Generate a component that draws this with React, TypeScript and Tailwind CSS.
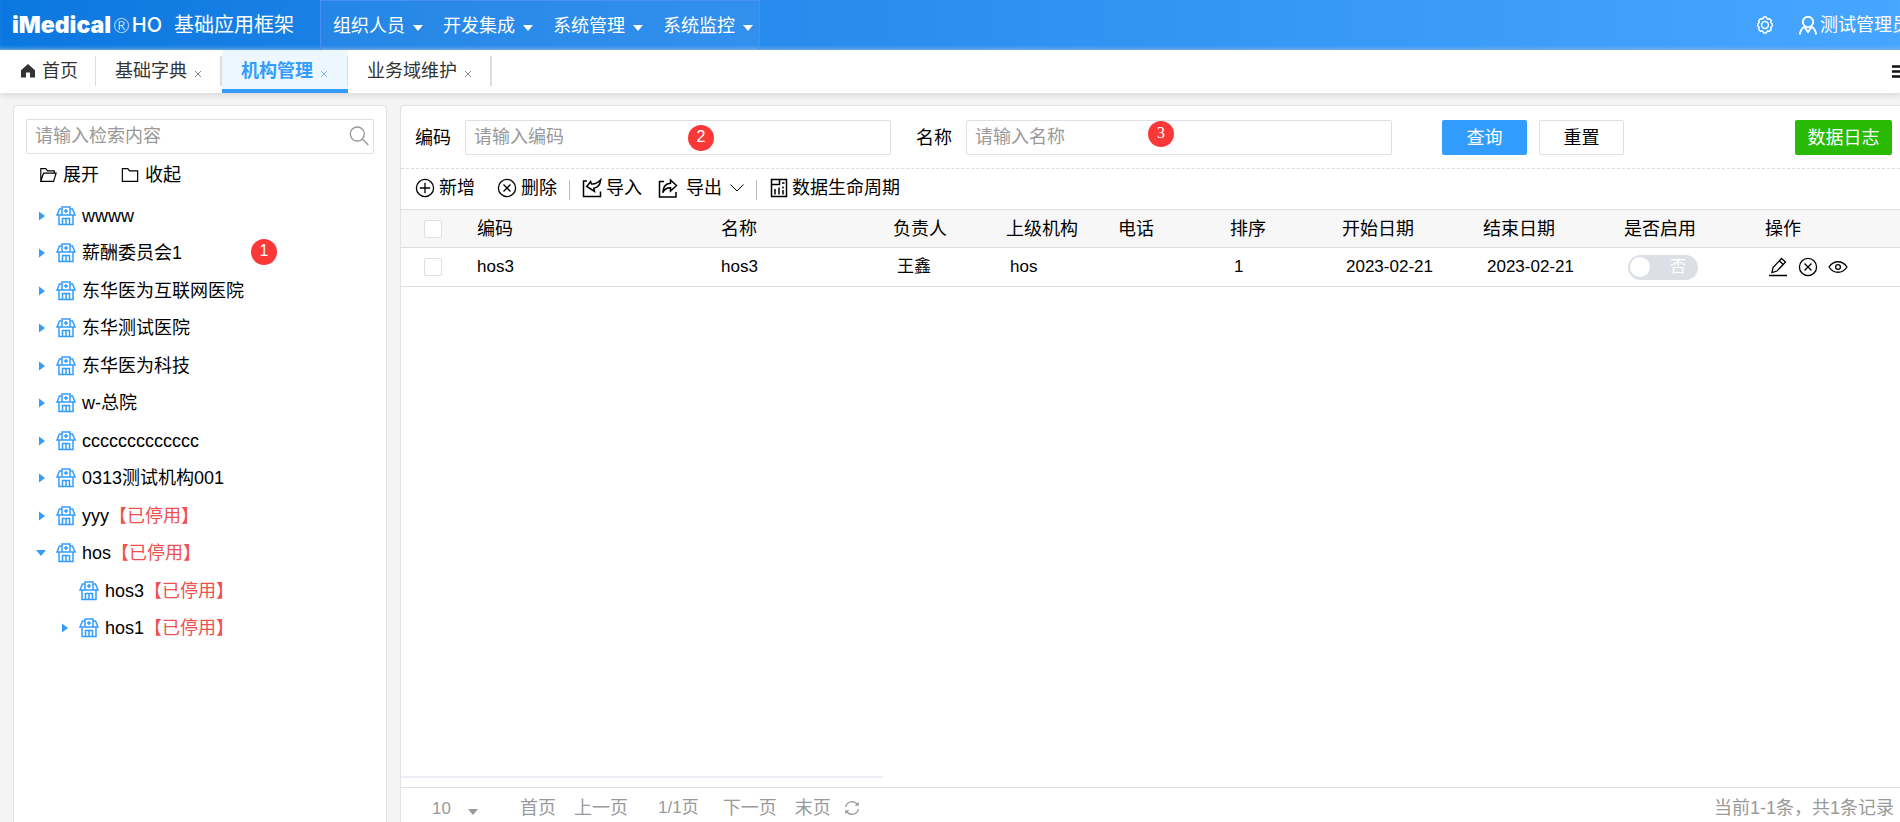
import { useState } from "react";
import type { ReactNode } from "react";
import clsx from "clsx";

interface TreeItem {
  label: string;
  disabled?: boolean;
  level?: number;
  state?: "closed" | "open" | "leaf";
}

const menus = ["组织人员", "开发集成", "系统管理", "系统监控"];

const tree: TreeItem[] = [
  { label: "wwww" },
  { label: "薪酬委员会1" },
  { label: "东华医为互联网医院" },
  { label: "东华测试医院" },
  { label: "东华医为科技" },
  { label: "w-总院" },
  { label: "ccccccccccccc" },
  { label: "0313测试机构001" },
  { label: "yyy", disabled: true },
  { label: "hos", disabled: true, state: "open" },
  { label: "hos3", disabled: true, level: 1, state: "leaf" },
  { label: "hos1", disabled: true, level: 1 },
];

const columns = [
  { title: "编码", width: "w-[244px]" },
  { title: "名称", width: "w-[172px]" },
  { title: "负责人", width: "w-[113px]" },
  { title: "上级机构", width: "w-[112px]" },
  { title: "电话", width: "w-[112px]" },
  { title: "排序", width: "w-[112px]" },
  { title: "开始日期", width: "w-[141px]" },
  { title: "结束日期", width: "w-[141px]" },
  { title: "是否启用", width: "w-[141px]" },
  { title: "操作", width: "" },
];

const row = ["hos3", "hos3", "王鑫", "hos", "", "1", "2023-02-21", "2023-02-21"];

function Icon({ size = 20, width = 1.3, className, children }: {
  size?: number;
  width?: number;
  className?: string;
  children: ReactNode;
}) {
  return (
    <svg
      width={size}
      height={size}
      viewBox="0 0 20 20"
      fill="none"
      stroke="currentColor"
      strokeWidth={width}
      className={clsx("shrink-0", className)}
      aria-hidden="true"
    >
      {children}
    </svg>
  );
}

function CaretDown({ className }: { className?: string }) {
  return (
    <svg width="10" height="6" viewBox="0 0 10 6" fill="currentColor" className={clsx("shrink-0", className)} aria-hidden="true">
      <path d="M0 0h10L5 6z" />
    </svg>
  );
}

function HospitalIcon() {
  return (
    <Icon width={1.5} className="text-[#339dff]">
      <path d="M6 3H3.500L1 9h18l-2.500-6H14" />
      <path d="M6 9V1h8v8M10 3v4M8 5h4" />
      <path d="M3 9v9.500h14V9M6.500 18.500v-6h7v6M10 12.500v6" />
    </Icon>
  );
}

function CircleX() {
  return (
    <Icon>
      <circle cx="10" cy="10" r="8.6" />
      <path d="M6.5 6.5l7 7M13.5 6.5l-7 7" />
    </Icon>
  );
}

function Badge({ children, className }: { children: ReactNode; className: string }) {
  return (
    <span
      className={clsx(
        "pointer-events-none absolute flex size-[26px] items-center justify-center rounded-full bg-[#fa3838] pb-0.5 text-base leading-none text-white",
        className
      )}
    >
      {children}
    </span>
  );
}

function Tab({ title, active }: { title: string; active?: boolean }) {
  return (
    <div className={clsx("relative flex h-full items-center gap-[7px] pr-5 pl-[19px]", active && "border-b-4 border-[#339dff] bg-[#edf7ff] pt-1 text-[#339dff]")}>
      <button className={clsx("pb-0.5 leading-6", active && "font-bold")}>{title}</button>
      <button aria-label={`关闭${title}`} className={clsx("pt-1", active ? "text-[#7db8f5]" : "text-[#888]")}>
        <svg width="8" height="8" viewBox="0 0 8 8" fill="none" stroke="currentColor" aria-hidden="true">
          <path d="M1 1l6 6M7 1L1 7" />
        </svg>
      </button>
      <span className={clsx("absolute top-1.5 right-0 h-[30px] bg-[#ddd]", active ? "w-px" : "w-0.5")} />
    </div>
  );
}

function Header() {
  return (
    <header className="flex h-[50px] shrink-0 items-center bg-linear-to-r from-[#0a78e0] to-[#46a6ff] text-white shadow-[inset_0_-4px_4px_-3px_#8abcf0]">
      <div className="flex w-[320px] shrink-0 items-center pl-3">
        <span className="font-['Inter'] text-[23px] font-black">iMedical</span>
        <span className="ml-0.5 font-['Lato'] text-xl font-light">®</span>
        <span className="ml-0.5 font-['Inter'] text-xl font-medium">HO</span>
        <h1 className="ml-3 text-xl">基础应用框架</h1>
      </div>
      <nav className="flex h-full items-center gap-5 border border-b-0 border-[#4a8ff8] bg-white/5 pr-1.5 pl-3">
        {menus.map((menu) => (
          <button key={menu} className="flex items-center gap-2">
            {menu}
            <CaretDown className="mt-1" />
          </button>
        ))}
      </nav>
      <div className="-mr-2.5 ml-auto flex shrink-0 items-center">
        <button aria-label="设置" className="mr-6">
          <Icon size={18} width={1.6}>
            <path d="M7.3 3.2L8.7 1.2h2.6l1.4 2 2.4-.2 1.8 1.9-.5 2.3 1.5 1.5v2.6l-1.5 1.5.5 2.3-1.8 1.9-2.4-.2-1.4 2H8.7l-1.4-2-2.4.2-1.8-1.9.5-2.3-1.5-1.5V8.700l1.500-1.500-.5-2.300L4.900 3z" />
            <circle cx="10" cy="10" r="3.8" />
          </Icon>
        </button>
        <button className="flex items-center gap-0.5">
          <Icon width={1.9}>
            <circle cx="10" cy="7" r="5.2" />
            <path d="M6.8 11.5C4 13 2.3 15.5 1.9 19.5M13.2 11.5c2.8 1.5 4.5 4 4.9 8M6.8 12.5l3.2 4.5 3.2-4.500" />
          </Icon>
          测试管理员
        </button>
      </div>
    </header>
  );
}

function TabBar() {
  return (
    <div className="z-10 flex h-[43px] shrink-0 items-center bg-white text-[#333] shadow-[0_2px_6px_#0000001f]">
      <div className="relative flex h-full w-24 items-center gap-1.5 pb-0.5 pl-5">
        <svg width="16" height="16" viewBox="0 0 16 16" fill="currentColor" aria-hidden="true">
          <path d="M8 1L1 7.3V14.5h5V9.5h4v5h5V7.3z" />
        </svg>
        <button>首页</button>
        <span className="absolute top-1.5 right-0 h-[30px] w-px bg-[#ddd]" />
      </div>
      <Tab title="基础字典" />
      <Tab title="机构管理" active />
      <Tab title="业务域维护" />
      <button aria-label="更多标签" className="-mr-2 ml-auto">
        <svg width="16" height="14" viewBox="0 0 16 14" fill="none" stroke="#111" strokeWidth="2.4" aria-hidden="true">
          <path d="M0 1.5h16M0 6.5h16M0 11.5h16" />
        </svg>
      </button>
    </div>
  );
}

function Sidebar() {
  return (
    <aside className="relative w-[374px] shrink-0 rounded-t border border-b-0 border-[#e2e2e2] bg-white px-3 pt-[13px]">
      <div className="relative">
        <input
          type="search"
          aria-label="检索内容"
          placeholder="请输入检索内容"
          className="h-[35px] w-full rounded-xs border border-[#dcdfe6] pr-9 pl-2 placeholder:text-[#999]"
        />
        <Icon className="absolute top-[7px] right-[5px] text-[#999]">
          <circle cx="8.3" cy="8" r="7" />
          <path d="M13.3 13l6 6" />
        </Icon>
      </div>
      <div className="mt-[7px] flex gap-[22px] pl-[13px]">
        <button className="flex items-center gap-1.5">
          <Icon size={18}>
            <path d="M2 17V3h5.5l2 2.5h7.5V8M2 17L5 8h14l-2.8 9z" />
          </Icon>
          展开
        </button>
        <button className="flex items-center gap-1.5">
          <Icon size={18}>
            <path d="M1.5 3h6l2 2.5h9V17h-17z" />
          </Icon>
          收起
        </button>
      </div>
      <ul className="mt-2">
        {tree.map(({ label, disabled, level = 0, state = "closed" }) => (
          <li key={label} className={clsx("flex h-[37px] items-center even:h-[38px]", level ? "pl-[33px]" : "pl-2.5")}>
            <span className="flex w-5 shrink-0 text-[#339dff]">
              {state === "open" && <CaretDown />}
              {state === "closed" && (
                <svg width="10" height="10" viewBox="0 0 10 10" fill="currentColor" aria-hidden="true">
                  <path d="M3 0.5v9L9 5z" />
                </svg>
              )}
            </span>
            <HospitalIcon />
            <span className="ml-1.5">
              {label}
              {disabled && <span className="text-[#f05050]">【已停用】</span>}
            </span>
          </li>
        ))}
      </ul>
      <Badge className="top-[133px] left-[237px]">1</Badge>
    </aside>
  );
}

function SearchForm() {
  return (
    <form className="relative flex items-center border-b border-dashed border-[#ddd] pt-3.5 pr-2 pb-[13px] pl-3.5">
      <label htmlFor="code" className="shrink-0">编码</label>
      <input id="code" placeholder="请输入编码" className="ml-3.5 h-[35px] min-w-0 max-w-[426px] flex-1 rounded-xs border border-[#dcdfe6] px-2 placeholder:text-[#999]" />
      <label htmlFor="name" className="ml-[25px] shrink-0">名称</label>
      <input id="name" placeholder="请输入名称" className="ml-3.5 h-[35px] min-w-0 max-w-[426px] flex-1 rounded-xs border border-[#dcdfe6] px-2 placeholder:text-[#999]" />
      <button type="button" className="ml-[50px] h-[35px] w-[85px] shrink-0 rounded-xs bg-[#339dff] text-white">查询</button>
      <button type="reset" className="ml-3 h-[35px] w-[85px] shrink-0 rounded-xs border border-[#dcdfe6]">重置</button>
      <button type="button" className="ml-auto h-[35px] w-[97px] shrink-0 rounded-xs bg-[#28ba05] text-white">数据日志</button>
      <Badge className="top-[19px] left-[287px]">2</Badge>
      <Badge className="top-[15px] left-[747px] font-['Liberation_Serif']">3</Badge>
    </form>
  );
}

function Toolbar() {
  return (
    <div className="flex h-10 items-center pb-0.5 pl-3.5">
      <button className="flex items-center gap-1">
        <Icon>
          <circle cx="10" cy="10" r="8.6" />
          <path d="M10 4.8v10.4M4.8 10h10.4" />
        </Icon>
        新增
      </button>
      <button className="ml-[22px] flex items-center gap-1">
        <CircleX />
        删除
      </button>
      <span className="mx-3 mt-1 h-5 w-px shrink-0 bg-[#bbb]" />
      <button className="flex items-center gap-1">
        <Icon width={1.5}>
          <path d="M5 3H1.5v15.5h17v-5" />
          <path d="M4.8 8.5L8.6 3.5l.8 2.4c3.8.4 6.5-1 9.3-4.1-.6 5-3 7.8-6.9 8.4l.7 3.3z" />
        </Icon>
        导入
      </button>
      <button className="ml-4 flex items-center gap-2">
        <Icon width={1.5}>
          <path d="M6 3.5H1.5v15.5h16.5v-5" />
          <path d="M12.5 2l6 5.5-6 5.5V9.8C9 9.6 6.5 11 4.8 14.8 5 9 7.5 5.5 12.5 5.2z" />
        </Icon>
        导出
        <svg width="14" height="8" viewBox="0 0 14 8" fill="none" stroke="currentColor" aria-hidden="true">
          <path d="M.5.5L7 7 13.5.5" />
        </svg>
      </button>
      <span className="mx-3 mt-1 h-5 w-px shrink-0 bg-[#bbb]" />
      <button className="flex items-center gap-[3px]">
        <Icon width={1.5}>
          <path d="M2.5 1.5h15v17h-15zM2.5 6.5h8v-5M13 5h2.5M6 11v5.5M10 9.5v7M14 8.5v2M14 12v4.5" />
        </Icon>
        数据生命周期
      </button>
    </div>
  );
}

function OrgTable() {
  const [enabled, setEnabled] = useState(false);
  const checkbox = "block size-[18px] appearance-none rounded-xs border border-[#dcdfe6] bg-white checked:bg-[#339dff]";

  return (
    <table className="w-full table-fixed border-collapse text-left">
      <thead>
        <tr className="h-[38px] border-y border-[#ddd] bg-[#f7f7f7]">
          <th className="w-[65px] pl-[23px]">
            <input type="checkbox" aria-label="全选" className={checkbox} />
          </th>
          {columns.map(({ title, width }) => (
            <th key={title} className={clsx("pl-[11px] font-normal", width)}>{title}</th>
          ))}
        </tr>
      </thead>
      <tbody>
        <tr className="h-[39px] border-b border-[#ddd] text-[17px]">
          <td className="pl-[23px]">
            <input type="checkbox" aria-label="选择 hos3" className={checkbox} />
          </td>
          {row.map((cell, i) => (
            <td key={i} className={i < 2 ? "pl-[11px]" : "pl-[15px]"}>{cell}</td>
          ))}
          <td className="pl-[15px]">
            <label className={clsx("relative flex h-[25px] w-[70px] items-center rounded-full text-base text-white", enabled ? "bg-[#339dff] pl-3" : "bg-[#dcdfe6] pl-[42px]")}>
              <input
                type="checkbox"
                role="switch"
                checked={enabled}
                onChange={(e) => setEnabled(e.target.checked)}
                className="absolute inset-0 appearance-none"
              />
              <span className={clsx("absolute size-5 rounded-full bg-white", enabled ? "right-0.5" : "left-0.5")} />
              {enabled ? "是" : "否"}
            </label>
          </td>
          <td className="pl-3.5">
            <div className="flex items-center gap-2.5">
              <button aria-label="编辑">
                <Icon>
                  <path d="M1 18.5h18M4 15.5l1-5 8.5-9 4 3.5-8.5 9zM11.5 4l3.5 3.2" />
                </Icon>
              </button>
              <button aria-label="停用"><CircleX /></button>
              <button aria-label="查看">
                <Icon>
                  <path d="M1 10c4.8-7 13.2-7 18 0-4.8 7-13.2 7-18 0z" />
                  <circle cx="10" cy="10" r="2.4" />
                </Icon>
              </button>
            </div>
          </td>
        </tr>
      </tbody>
    </table>
  );
}

function Pagination() {
  return (
    <footer className="flex h-[35px] shrink-0 items-center border-t border-[#ddd] pt-1.5 pr-1.5 pl-[31px] text-[#999]">
      <div className="relative">
        <select aria-label="每页条数" className="w-[50px] appearance-none text-[17px]">
          <option>10</option>
        </select>
        <CaretDown className="pointer-events-none absolute right-1 bottom-2" />
      </div>
      <button className="ml-[38px]">首页</button>
      <button className="ml-[18px]">上一页</button>
      <span className="mr-6 ml-[30px] text-[17px]">1/1页</span>
      <button>下一页</button>
      <button className="ml-[18px]">末页</button>
      <button aria-label="刷新" className="ml-3">
        <Icon size={18}>
          <path d="M3 9A7 7 0 0 1 16 6.5M17 11a7 7 0 0 1-13 2.5" />
          <path d="M17.5 3v4.5H13zM2.5 17v-4.5H7z" fill="currentColor" stroke="none" />
        </Icon>
      </button>
      <span className="ml-auto text-right">当前1-1条，共1条记录</span>
    </footer>
  );
}

export default function App() {
  return (
    <div className="flex h-screen flex-col overflow-hidden bg-[#f4f4f4] font-['Liberation_Sans','Noto_Sans_CJK_SC',sans-serif] text-lg leading-7 text-black">
      <Header />
      <TabBar />
      <div className="flex min-h-0 flex-1 gap-[13px] pt-3 pl-[13px]">
        <Sidebar />
        <main className="flex min-w-0 flex-1 flex-col rounded-tl border-t border-l border-[#e2e2e2] bg-white">
          <SearchForm />
          <Toolbar />
          <div className="flex min-h-0 flex-1 flex-col justify-between pb-[9px]">
            <OrgTable />
            <div className="h-0.5 w-[482px] bg-[#ebeef5]" />
          </div>
          <Pagination />
        </main>
      </div>
    </div>
  );
}
